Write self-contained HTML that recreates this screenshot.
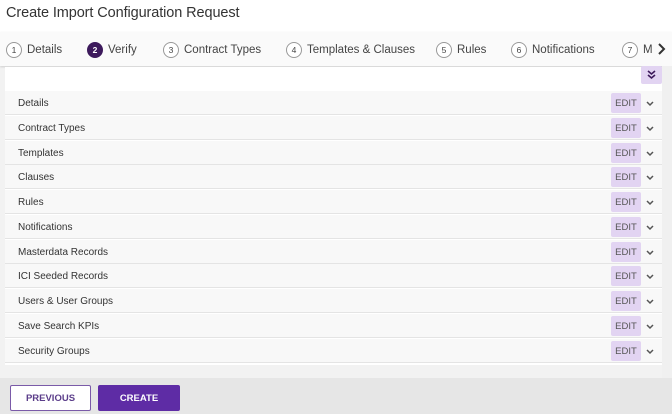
<!DOCTYPE html>
<html><head><style>
*{box-sizing:border-box;margin:0;padding:0}
body{width:672px;height:414px;overflow:hidden;background:#f2f2f2;font-family:"Liberation Sans",sans-serif;position:relative;color:#333}
.hdr{position:absolute;left:0;top:0;width:672px;height:32px;background:#fff;}
.hdr h1{position:absolute;left:6px;top:5px;font-size:14.5px;font-weight:normal;color:#333;letter-spacing:-0.1px}
.steps{position:absolute;left:0;top:32px;width:672px;height:34px;background:#fafafa;box-shadow:0 1px 2px rgba(0,0,0,.15)}
.st{position:absolute;top:9px;height:18px;display:flex;align-items:center;font-size:11.5px;color:#444;white-space:nowrap}
.st i{display:inline-block;width:16px;height:16px;border:1px solid #999;border-radius:50%;font-style:normal;font-size:8.5px;text-align:center;line-height:14px;margin-right:5px;background:#fff;flex:none}
.st.a i{background:#3d1a5c;border-color:#3d1a5c;color:#fff;font-weight:bold}
.panel{position:absolute;left:5px;top:67px;width:657px;height:298px;background:#fff}
.row{position:absolute;left:5px;width:657px;height:24px;background:#f8f8f8;border-bottom:1px solid #e4e4e4;font-size:10px;color:#333}
.row span{position:absolute;left:13px;top:7px}
.edit{position:absolute;left:606px;top:2px;width:30px;height:20px;background:#e2d4f2;border-radius:2px;color:#555;font-size:9.5px;text-align:center;line-height:21px}
.chev{position:absolute;left:641px;top:10px}
.foot{position:absolute;left:0;top:378px;width:672px;height:36px;background:#e6e6e6}
.btn{position:absolute;top:7px;height:26px;font-size:9.5px;font-weight:bold;display:flex;align-items:center;justify-content:center;border-radius:2px}
</style></head><body>
<div class="hdr"><h1>Create Import Configuration Request</h1></div>
<div class="steps">
<div class="st" style="left:6px"><i>1</i>Details</div>
<div class="st a" style="left:87px"><i>2</i>Verify</div>
<div class="st" style="left:163px"><i>3</i>Contract Types</div>
<div class="st" style="left:286px"><i>4</i>Templates &amp; Clauses</div>
<div class="st" style="left:436px"><i>5</i>Rules</div>
<div class="st" style="left:511px"><i>6</i>Notifications</div>
<div class="st" style="left:622px"><i>7</i>M</div>
<svg style="position:absolute;left:657px;top:11px" width="10" height="12" viewBox="0 0 10 12"><path d="M2 1 L7 6 L2 11" fill="none" stroke="#333" stroke-width="2"/></svg>
</div>
<div class="panel"></div>
<div style="position:absolute;left:641px;top:66px;width:21px;height:18px;background:#e2d4f2;border-radius:2px"><svg style="position:absolute;left:6px;top:4px" width="9" height="10" viewBox="0 0 9 10"><path d="M1 1 L4.5 4 L8 1 M1 5 L4.5 8 L8 5" fill="none" stroke="#3d1a5c" stroke-width="1.6"/></svg></div>
<div style="position:absolute;left:662px;top:66px;width:10px;height:312px;background:#f0f0f0"></div>
<div class="row" style="top:91px"><span>Details</span><div class="edit">EDIT</div><svg class="chev" width="8" height="6" viewBox="0 0 8 6"><path d="M1 1 L4 4 L7 1" fill="none" stroke="#555" stroke-width="1.5"/></svg></div>
<div class="row" style="top:116px"><span>Contract Types</span><div class="edit">EDIT</div><svg class="chev" width="8" height="6" viewBox="0 0 8 6"><path d="M1 1 L4 4 L7 1" fill="none" stroke="#555" stroke-width="1.5"/></svg></div>
<div class="row" style="top:141px"><span>Templates</span><div class="edit">EDIT</div><svg class="chev" width="8" height="6" viewBox="0 0 8 6"><path d="M1 1 L4 4 L7 1" fill="none" stroke="#555" stroke-width="1.5"/></svg></div>
<div class="row" style="top:165px"><span>Clauses</span><div class="edit">EDIT</div><svg class="chev" width="8" height="6" viewBox="0 0 8 6"><path d="M1 1 L4 4 L7 1" fill="none" stroke="#555" stroke-width="1.5"/></svg></div>
<div class="row" style="top:190px"><span>Rules</span><div class="edit">EDIT</div><svg class="chev" width="8" height="6" viewBox="0 0 8 6"><path d="M1 1 L4 4 L7 1" fill="none" stroke="#555" stroke-width="1.5"/></svg></div>
<div class="row" style="top:215px"><span>Notifications</span><div class="edit">EDIT</div><svg class="chev" width="8" height="6" viewBox="0 0 8 6"><path d="M1 1 L4 4 L7 1" fill="none" stroke="#555" stroke-width="1.5"/></svg></div>
<div class="row" style="top:240px"><span>Masterdata Records</span><div class="edit">EDIT</div><svg class="chev" width="8" height="6" viewBox="0 0 8 6"><path d="M1 1 L4 4 L7 1" fill="none" stroke="#555" stroke-width="1.5"/></svg></div>
<div class="row" style="top:264px"><span>ICI Seeded Records</span><div class="edit">EDIT</div><svg class="chev" width="8" height="6" viewBox="0 0 8 6"><path d="M1 1 L4 4 L7 1" fill="none" stroke="#555" stroke-width="1.5"/></svg></div>
<div class="row" style="top:289px"><span>Users &amp; User Groups</span><div class="edit">EDIT</div><svg class="chev" width="8" height="6" viewBox="0 0 8 6"><path d="M1 1 L4 4 L7 1" fill="none" stroke="#555" stroke-width="1.5"/></svg></div>
<div class="row" style="top:314px"><span>Save Search KPIs</span><div class="edit">EDIT</div><svg class="chev" width="8" height="6" viewBox="0 0 8 6"><path d="M1 1 L4 4 L7 1" fill="none" stroke="#555" stroke-width="1.5"/></svg></div>
<div class="row" style="top:339px"><span>Security Groups</span><div class="edit">EDIT</div><svg class="chev" width="8" height="6" viewBox="0 0 8 6"><path d="M1 1 L4 4 L7 1" fill="none" stroke="#555" stroke-width="1.5"/></svg></div>
<div class="foot">
<div class="btn" style="left:10px;width:81px;background:#fff;border:1px solid #7a5aa8;color:#5b3d8a">PREVIOUS</div>
<div class="btn" style="left:98px;width:82px;background:#5e2ca5;color:#fff;border:1px solid #5e2ca5">CREATE</div>
</div>
</body></html>
